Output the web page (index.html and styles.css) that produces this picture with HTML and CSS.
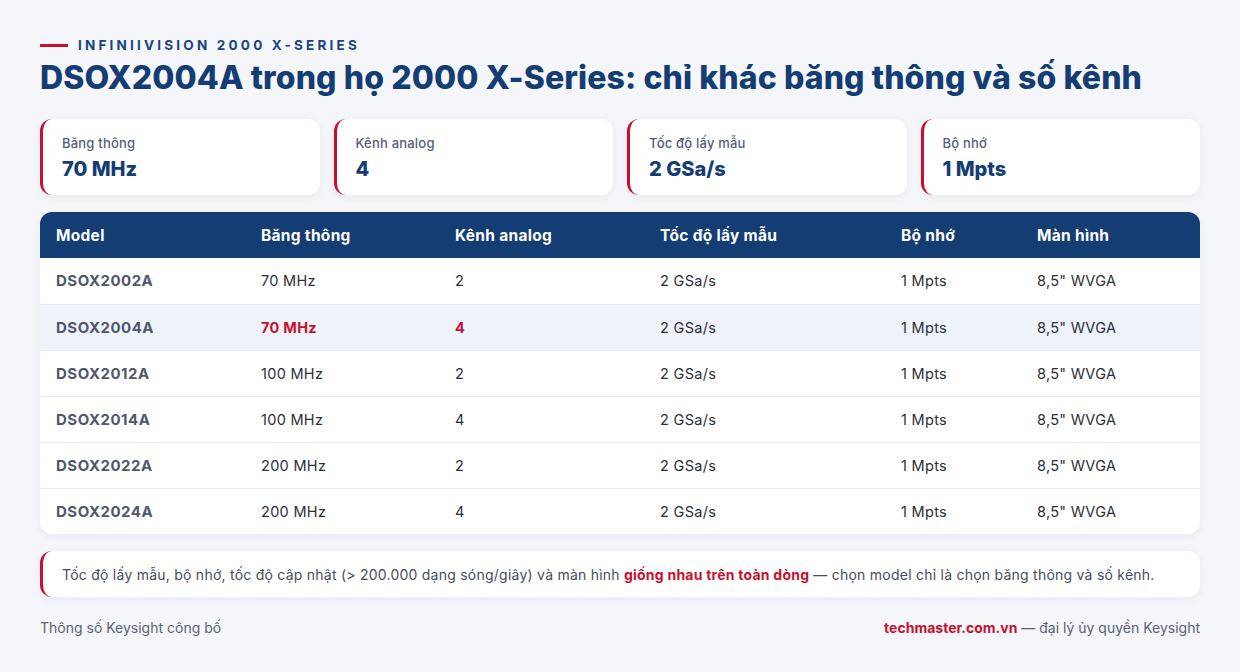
FILE: index.html
```html
<!DOCTYPE html>
<html lang="vi">
<head>
<meta charset="utf-8">
<link rel="stylesheet" href="styles.css">
</head>
<body>
<div class="page">
  <div class="eyebrow"><span class="bar"></span><span>INFINIIVISION 2000 X-SERIES</span></div>
  <h1 class="title">DSOX2004A trong họ 2000 X-Series: chỉ khác băng thông và số kênh</h1>

  <div class="cards">
    <div class="card"><div class="label">Băng thông</div><div class="value">70 MHz</div></div>
    <div class="card"><div class="label">Kênh analog</div><div class="value">4</div></div>
    <div class="card"><div class="label">Tốc độ lấy mẫu</div><div class="value">2 GSa/s</div></div>
    <div class="card"><div class="label">Bộ nhớ</div><div class="value">1 Mpts</div></div>
  </div>

  <div class="table-wrap">
    <table class="spec">
      <colgroup>
        <col class="c1"><col class="c2"><col class="c3"><col class="c4"><col class="c5"><col class="c6">
      </colgroup>
      <thead>
        <tr><th>Model</th><th>Băng thông</th><th>Kênh analog</th><th>Tốc độ lấy mẫu</th><th>Bộ nhớ</th><th>Màn hình</th></tr>
      </thead>
      <tbody>
        <tr><td class="model">DSOX2002A</td><td>70 MHz</td><td>2</td><td>2 GSa/s</td><td>1 Mpts</td><td>8,5" WVGA</td></tr>
        <tr class="hl"><td class="model">DSOX2004A</td><td class="red">70 MHz</td><td class="red">4</td><td>2 GSa/s</td><td>1 Mpts</td><td>8,5" WVGA</td></tr>
        <tr><td class="model">DSOX2012A</td><td>100 MHz</td><td>2</td><td>2 GSa/s</td><td>1 Mpts</td><td>8,5" WVGA</td></tr>
        <tr><td class="model">DSOX2014A</td><td>100 MHz</td><td>4</td><td>2 GSa/s</td><td>1 Mpts</td><td>8,5" WVGA</td></tr>
        <tr><td class="model">DSOX2022A</td><td>200 MHz</td><td>2</td><td>2 GSa/s</td><td>1 Mpts</td><td>8,5" WVGA</td></tr>
        <tr><td class="model">DSOX2024A</td><td>200 MHz</td><td>4</td><td>2 GSa/s</td><td>1 Mpts</td><td>8,5" WVGA</td></tr>
      </tbody>
    </table>
  </div>

  <div class="note">Tốc độ lấy mẫu, bộ nhớ, tốc độ cập nhật (&gt; 200.000 dạng sóng/giây) và màn hình <strong>giống nhau trên toàn dòng</strong> — chọn model chỉ là chọn băng thông và số kênh.</div>

  <div class="footer">
    <span>Thông số Keysight công bố</span>
    <span><strong>techmaster.com.vn</strong> — đại lý ủy quyền Keysight</span>
  </div>
</div>
</body>
</html>
```

FILE: styles.css
```css
* { box-sizing: border-box; }
html, body { margin: 0; padding: 0; }
body {
  background: #f4f6fa;
  font-family: Inter, "Noto Sans", "Liberation Sans", sans-serif;
  color: #333a48;
  width: 1240px;
  height: 672px;
  overflow: hidden;
}
.page {
  padding: 36px 40px 0 40px;
}
.eyebrow {
  display: flex;
  align-items: center;
  gap: 10px;
  color: #1d4480;
  font-weight: 700;
  font-size: 13.5px;
  letter-spacing: 3.2px;
  height: 18px;
}
.eyebrow .bar {
  display: block;
  width: 28px;
  height: 3px;
  background: #c8102e;
}
.title {
  margin: 3px 0 0 0;
  font-size: 32px;
  line-height: 42px;
  font-weight: 800;
  color: #143d73;
  letter-spacing: 0.1px;
}
.cards {
  display: grid;
  grid-template-columns: repeat(4, 1fr);
  gap: 14px;
  margin-top: 20px;
}
.card {
  background: #fff;
  border-radius: 12px;
  border-left: 3px solid #c8102e;
  height: 76px;
  padding: 16px 19px 0;
  box-shadow: 0 2px 8px rgba(20, 40, 80, 0.06);
}
.card .label {
  font-size: 13px;
  color: #56607a;
  line-height: 17px;
  letter-spacing: 0.2px;
  font-weight: 500;
}
.card .value {
  margin-top: 5px;
  font-size: 20px;
  font-weight: 800;
  color: #143d73;
  line-height: 24px;
}
.table-wrap {
  margin-top: 17px;
  background: #fff;
  border-radius: 12px;
  overflow: hidden;
  box-shadow: 0 2px 8px rgba(20, 40, 80, 0.06);
}
.spec {
  width: 100%;
  border-collapse: collapse;
  table-layout: fixed;
  font-size: 14.5px;
  letter-spacing: 0.3px;
}
.spec col.c1 { width: 205px; }
.spec col.c2 { width: 194px; }
.spec col.c3 { width: 205px; }
.spec col.c4 { width: 241px; }
.spec col.c5 { width: 136px; }
.spec th {
  background: #143d73;
  color: #fff;
  text-align: left;
  font-weight: 700;
  font-size: 15.5px;
  letter-spacing: 0.3px;
  height: 46px;
  padding: 0 16px;
}
.spec td {
  height: 46px;
  padding: 0 16px;
  color: #2b2f38;
  border-top: 1px solid #e6ebf2;
}
.spec tbody tr:first-child td { border-top: none; }
.spec td.model {
  font-weight: 700;
  color: #4f586a;
  font-size: 15px;
  letter-spacing: 0.5px;
}
.spec tr.hl td { background: #eef3fa; }
.spec td.red { color: #c8102e; font-weight: 700; }
.note {
  margin-top: 17px;
  background: #fff;
  border-radius: 12px;
  border-left: 3px solid #c8102e;
  height: 46px;
  display: flex;
  align-items: center;
  padding: 0 19px;
  font-size: 14px;
  letter-spacing: 0.24px;
  color: #454d5c;
  box-shadow: 0 2px 8px rgba(20, 40, 80, 0.06);
}
.note strong { color: #c8102e; font-weight: 700; margin: 0 4px; }
.footer {
  margin-top: 22px;
  display: flex;
  justify-content: space-between;
  font-size: 14px;
  color: #5b6373;
}
.footer strong { color: #c8102e; font-weight: 700; }
```
